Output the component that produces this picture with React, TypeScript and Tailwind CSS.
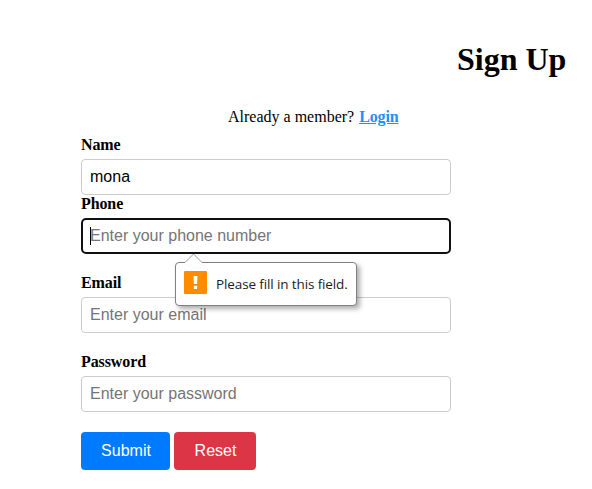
import React from "react";

const serif = "font-['Liberation_Serif',serif]";
const inputBase =
  "block w-[370px] h-9 rounded border border-[#ccc] bg-white pl-2 text-base leading-[34px] text-black placeholder:text-[#757575] placeholder:opacity-100 outline-none font-['Liberation_Sans',sans-serif]";

function Field({ label, className, children }: { label: string; className: string; children: React.ReactNode }) {
  return (
    <div className={className}>
      <label className={`${serif} mb-[5px] block text-base font-bold leading-[18px] tracking-[-0.1px]`}>{label}</label>
      {children}
    </div>
  );
}

function ValidationBubble() {
  return (
    <div className="absolute left-[94px] top-[34px] z-10 w-[182px]">
      <div className="mt-[10px] flex h-[44px] items-start rounded-[4px] border border-[#808080] bg-white pl-2 pt-2 shadow-[3px_3px_5px_rgba(0,0,0,0.32)]">
        <svg width="23" height="23" viewBox="0 0 23 23" className="shrink-0">
          <rect width="23" height="23" rx="1" fill="#ff8c00" />
          <path d="M9.5 5h4l-.4 8h-3.2z" fill="#fff" />
          <rect x="9.9" y="14.8" width="3.2" height="3.2" rx="0.5" fill="#fff" />
        </svg>
        <span className="ml-[9px] mt-[3px] whitespace-nowrap font-['Open_Sans',sans-serif] text-[13.5px] leading-5 tracking-[-0.12px] text-[#1c1c1c]">
          Please fill in this field.
        </span>
      </div>
      <svg width="17" height="10" viewBox="0 0 17 10" className="absolute left-[10px] top-[1px]">
        <path d="M0 9.5L8.5 1L17 9.5V10H0z" fill="#fff" />
        <path d="M0 9.5L8.5 1L17 9.5" fill="none" stroke="#9a9a9a" />
      </svg>
    </div>
  );
}

export default function App() {
  return (
    <main className="h-[489px] w-[592px] overflow-hidden bg-white text-black">
      <h1 className={`${serif} ml-[457px] pt-[41px] text-[32px] font-bold leading-[37px]`}>Sign Up</h1>
      <p className={`${serif} ml-[228px] mt-[30px] text-base leading-[18px]`}>
        Already a member? <a className="ml-px font-bold tracking-[-0.15px] text-[#1e90ff] underline">Login</a>
      </p>
      <form className="ml-[81px]" onSubmit={(e) => e.preventDefault()}>
        <Field label="Name" className="pt-[10px]">
          <input className={inputBase} defaultValue="mona" />
        </Field>
        <Field label="Phone" className="">
          <div className="relative">
            <input className={`${inputBase} rounded-[5px]! border-2! border-[#101010]! pl-[7px]!`} placeholder="Enter your phone number" />
            <span className="absolute left-[9px] top-[9px] h-[18px] w-px bg-black" />
            <ValidationBubble />
          </div>
        </Field>
        <Field label="Email" className="mt-5">
          <input className={inputBase} placeholder="Enter your email" />
        </Field>
        <Field label="Password" className="mt-5">
          <input className={inputBase} placeholder="Enter your password" />
        </Field>
        <div className="mt-5 flex gap-1 font-['Liberation_Sans',sans-serif] text-base text-white">
          <button type="submit" className="h-[38px] w-[89px] rounded bg-[#007bff] pl-px">Submit</button>
          <button type="reset" className="h-[38px] w-[82px] rounded bg-[#dc3545] pl-px">Reset</button>
        </div>
      </form>
    </main>
  );
}
